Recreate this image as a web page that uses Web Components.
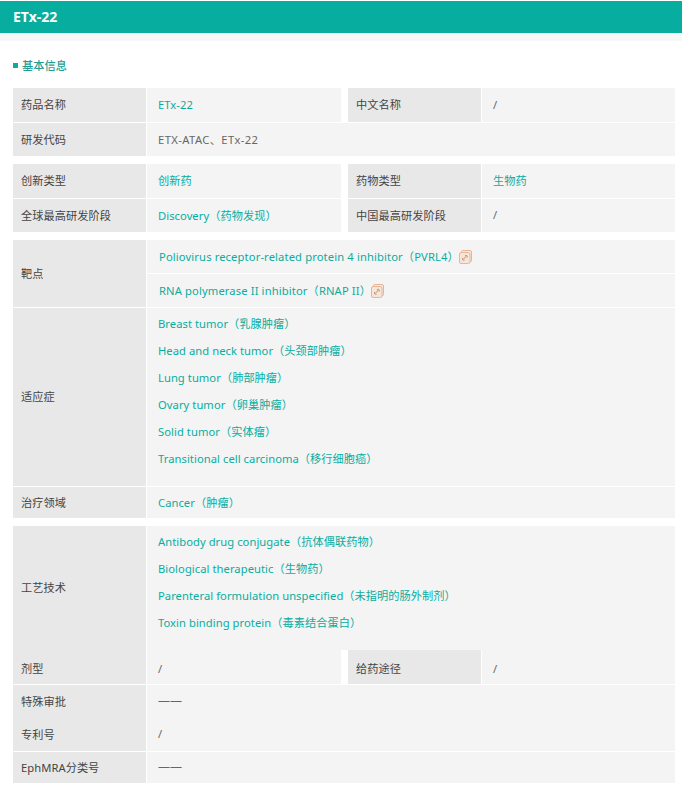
<!DOCTYPE html>
<html lang="zh">
<head>
<meta charset="utf-8">
<title>ETx-22</title>
<style>
  html, body { margin: 0; padding: 0; background: #fff; }
  body { padding-top: 1px; font: 11.2px "Noto Sans", "Noto Sans CJK SC", sans-serif; letter-spacing: 0.06px; }
  main { padding: 0 7px 0 13px; }
  .wide { letter-spacing: 0.42px; }
  .dash { font-size: 12px; letter-spacing: 0; }
</style>
</head>
<body>
<drug-header>ETx-22</drug-header>
<main>
  <section-title>基本信息</section-title>

  <info-table>
    <info-row>
      <info-field label="药品名称" h="34"><term-link>ETx-22</term-link></info-field>
      <info-field label="中文名称" h="34">/</info-field>
    </info-row>
    <info-row>
      <info-field label="研发代码" h="33"><span class="wide">ETX-ATAC、ETx-22</span></info-field>
    </info-row>
  </info-table>

  <info-table>
    <info-row>
      <info-field label="创新类型" h="34"><term-link>创新药</term-link></info-field>
      <info-field label="药物类型" h="34"><term-link>生物药</term-link></info-field>
    </info-row>
    <info-row>
      <info-field label="全球最高研发阶段" h="33"><term-link>Discovery（药物发现）</term-link></info-field>
      <info-field label="中国最高研发阶段" h="33">/</info-field>
    </info-row>
  </info-table>

  <info-table>
    <info-row>
      <info-field label="靶点" flush>
        <target-line>Poliovirus receptor-related protein 4 inhibitor（PVRL4）</target-line>
        <target-line last>RNA polymerase II inhibitor（RNAP II）</target-line>
      </info-field>
    </info-row>
    <info-row>
      <info-field label="适应症" h="178" stack="2 14">
        <term-link block>Breast tumor（乳腺肿瘤）</term-link>
        <term-link block>Head and neck tumor（头颈部肿瘤）</term-link>
        <term-link block>Lung tumor（肺部肿瘤）</term-link>
        <term-link block>Ovary tumor（卵巢肿瘤）</term-link>
        <term-link block>Solid tumor（实体瘤）</term-link>
        <term-link block>Transitional cell carcinoma（移行细胞癌）</term-link>
      </info-field>
    </info-row>
    <info-row>
      <info-field label="治疗领域" h="31"><term-link>Cancer（肿瘤）</term-link></info-field>
    </info-row>
  </info-table>

  <info-table>
    <info-row>
      <info-field label="工艺技术" h="124" stack="2 14">
        <term-link block>Antibody drug conjugate（抗体偶联药物）</term-link>
        <term-link block>Biological therapeutic（生物药）</term-link>
        <term-link block>Parenteral formulation unspecified（未指明的肠外制剂）</term-link>
        <term-link block>Toxin binding protein（毒素结合蛋白）</term-link>
      </info-field>
    </info-row>
    <info-row joined>
      <info-field label="剂型" h="34" low>/</info-field>
      <info-field label="给药途径" h="34" low>/</info-field>
    </info-row>
    <info-row>
      <info-field label="特殊审批" h="33"><span class="dash">——</span></info-field>
    </info-row>
    <info-row joined>
      <info-field label="专利号" h="33">/</info-field>
    </info-row>
    <info-row>
      <info-field label="EphMRA分类号" h="31"><span class="dash">——</span></info-field>
    </info-row>
  </info-table>
</main>

<script>
  // helper: every element here is a small shadow root with its own style
  function shadow(el, html) {
    el.attachShadow({ mode: 'open' }).innerHTML = html;
  }

  class DrugHeader extends HTMLElement {
    connectedCallback() {
      shadow(this, `
        <style>
          :host {
            display: block;
            height: 32px;
            line-height: 32px;
            padding-left: 13px;
            background: #07ad9f;
            color: #fff;
            font-size: 14px;
            font-weight: 700;
            letter-spacing: 0;
            border-bottom: 8px solid #f7f7f7;
          }
        </style>
        <slot></slot>`);
    }
  }

  class SectionTitle extends HTMLElement {
    connectedCallback() {
      shadow(this, `
        <style>
          :host {
            display: flex;
            align-items: center;
            gap: 4px;
            height: 16px;
            margin: 16px 0 15px;
            color: #1f9d92;
            font-weight: 500;
          }
          i { width: 5px; height: 5px; background: #07ad9f; }
        </style>
        <i></i><slot></slot>`);
    }
  }

  class InfoTable extends HTMLElement {
    connectedCallback() {
      shadow(this, `
        <style>
          :host { display: flex; flex-direction: column; gap: 1px; margin-bottom: 8px; }
        </style>
        <slot></slot>`);
    }
  }

  class InfoRow extends HTMLElement {
    connectedCallback() {
      shadow(this, `
        <style>
          :host { display: flex; gap: 7px; }
          :host([joined]) { margin-top: -1px; }
          ::slotted(info-field) { flex: 1 1 0; }
          ::slotted(info-field:first-child:not(:last-child)) { flex: 0 0 328px; }
        </style>
        <slot></slot>`);
    }
  }

  class InfoField extends HTMLElement {
    connectedCallback() {
      const h = this.getAttribute('h');
      const stack = this.getAttribute('stack');
      const flush = this.hasAttribute('flush');
      // text sits a pixel above the middle of the cell, except on the low row
      const nudge = this.hasAttribute('low') ? 'padding-top: 2px;' : 'padding-bottom: 2px;';
      let valueCss = `display: flex; align-items: center; padding-left: 11px; padding-right: 11px; ${nudge}`;
      if (stack) {
        const [top, bottom] = stack.split(' ');
        valueCss = `display: block; padding: ${top}px 11px ${bottom}px;`;
      }
      if (flush) valueCss = 'display: block; padding: 0;';
      shadow(this, `
        <style>
          :host {
            display: grid;
            grid-template-columns: 133px 1fr;
            column-gap: 1px;
            ${h ? `height: ${h}px;` : ''}
            color: #666;
          }
          .label {
            display: flex;
            align-items: center;
            padding-left: 8px;
            ${nudge}
            background: #e8e8e8;
            color: #444;
          }
          .value { ${valueCss} background: #f4f4f4; min-width: 0; }
        </style>
        <div class="label" part="label"></div>
        <div class="value"><slot></slot></div>`);
      this.shadowRoot.querySelector('.label').textContent = this.getAttribute('label');
    }
  }

  class TermLink extends HTMLElement {
    connectedCallback() {
      shadow(this, `
        <style>
          :host { display: inline; color: #07ad9f; }
          :host([block]) { display: block; height: 27px; line-height: 27px; }
        </style>
        <slot></slot>`);
    }
  }

  class TargetLine extends HTMLElement {
    connectedCallback() {
      shadow(this, `
        <style>
          :host {
            display: flex;
            align-items: center;
            height: 33px;
            padding-left: 12px;
            color: #07ad9f;
            letter-spacing: 0.13px;
            border-bottom: 1px solid #fff;
          }
          :host([last]) { border-bottom: 0; }
          span { position: relative; top: -1px; }
          svg { width: 13px; height: 14px; flex: none; }
        </style>
        <span><slot></slot></span>
        <svg viewBox="0 0 13 14" fill="none" stroke="#e4b597" stroke-width="1">
          <path d="M2.5 2 v-0.2 a1.3 1.3 0 0 1 1.3-1.3 h7.2 a1.5 1.5 0 0 1 1.5 1.5 v8.5 a1.3 1.3 0 0 1-1.3 1.3" fill="#f6ebe3"/>
          <rect x="0.5" y="2.5" width="10.5" height="11" rx="1.5" fill="#f6e6da"/>
          <path d="M4 9.6 l3.4-3.6 M3.8 8 a1.2 1.2 0 0 0 1.8 2 M6 5.6 a1.2 1.2 0 0 1 1.9 2" stroke="#c9916f"/>
        </svg>`);
    }
  }

  customElements.define('drug-header', DrugHeader);
  customElements.define('section-title', SectionTitle);
  customElements.define('info-table', InfoTable);
  customElements.define('info-row', InfoRow);
  customElements.define('info-field', InfoField);
  customElements.define('term-link', TermLink);
  customElements.define('target-line', TargetLine);
</script>
</body>
</html>
